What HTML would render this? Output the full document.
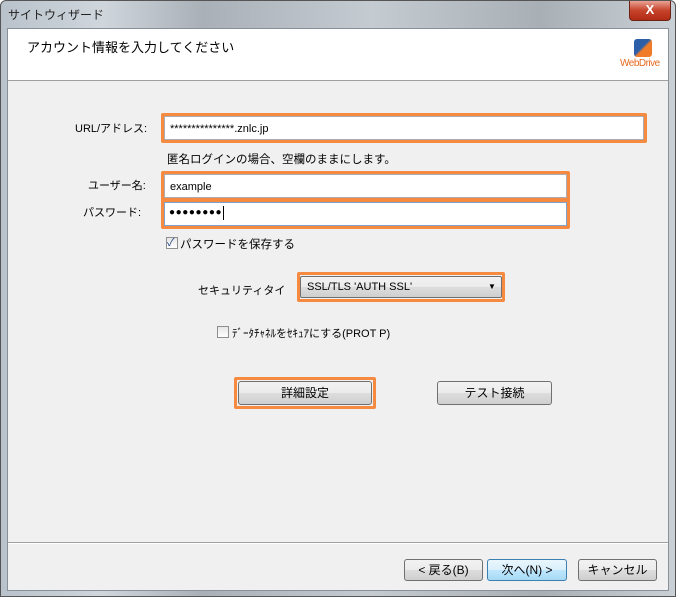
<!DOCTYPE html>
<html><head><meta charset="utf-8"><style>
*{margin:0;padding:0;box-sizing:border-box}
body{width:676px;height:597px;overflow:hidden;font-family:"Liberation Sans","Noto Sans CJK JP",sans-serif;font-size:12px;color:#000;background:#fff}
.win{position:absolute;left:0;top:0;width:676px;height:597px;background:linear-gradient(90deg,#b9c2cb 0%,#cfd6dc 15%,#a9b0b7 30%,#c4cbd1 55%,#a8afb5 80%,#c9d0d6 100%);border:1px solid #555;border-radius:6px 6px 0 0}
.title{position:absolute;left:7px;top:5px;font-size:12px;color:#222}
.close{position:absolute;left:628px;top:0;width:42px;height:20px;background:linear-gradient(#e8a294,#c7432b 50%,#b22a14);border:1px solid #6b2416;border-top:none;border-radius:0 0 4px 4px;color:#fff;font-weight:bold;text-align:center;font-size:13px;line-height:18px}
.client{position:absolute;left:7px;top:28px;width:662px;height:563px;background:#f0f0f0;border:1px solid #8a9097}
.head{position:absolute;left:0;top:0;width:660px;height:52px;background:#fff;border-bottom:1px solid #a0a0a0}
.abs{position:absolute;white-space:nowrap}
.lbl{font-size:11px}
.or{position:absolute;border:3px solid #f58a40;border-radius:2px}
.inp{position:absolute;background:#fff;border:1px solid #abadb3}
.btn{position:absolute;border:1px solid #707070;border-radius:3px;background:linear-gradient(#f2f2f2,#ebebeb 50%,#dddddd 51%,#cfcfcf);text-align:center;line-height:20px;font-size:12px}
.cb{position:absolute;width:12px;height:12px;border:1px solid #8f8f8f;background:linear-gradient(#e6e6e6,#fff)}
</style></head><body>
<div class="win">
<div class="title">サイトウィザード</div>
<div class="close">X</div>
</div>
<div class="client">
<div class="head">
<div class="abs" style="left:19px;top:8px;font-size:13px">アカウント情報を入力してください</div>
<div class="abs" style="left:626px;top:10px;width:18px;height:18px;border-radius:3px;background:linear-gradient(135deg,#2c5fa8 45%,#f07c2a 55%)"></div>
<div class="abs" style="left:612px;top:29px;font-size:10px;color:#e86a1e;letter-spacing:-0.5px">WebDrive</div>
</div>
<div style="position:absolute;left:0;top:513px;width:660px;height:1px;background:#a0a0a0"></div>
<div style="position:absolute;left:0;top:514px;width:660px;height:1px;background:#fff"></div>
</div>

<div class="abs lbl" style="left:75px;top:120px">URL/アドレス:</div>
<div class="or" style="left:161px;top:113px;width:486px;height:30px"></div>
<div class="inp" style="left:164px;top:116px;width:480px;height:24px"></div>
<div class="abs" style="left:170px;top:123px;font-size:11px">***************.znlc.jp</div>
<div class="abs" style="left:167px;top:151px;font-size:11.5px">匿名ログインの場合、空欄のままにします。</div>

<div class="abs lbl" style="left:88px;top:177px">ユーザー名:</div>
<div class="abs lbl" style="left:83px;top:204px">パスワード:</div>
<div class="or" style="left:161px;top:171px;width:409px;height:30px"></div>
<div class="or" style="left:161px;top:199px;width:409px;height:30px"></div>
<div class="inp" style="left:164px;top:174px;width:403px;height:24px"></div>
<div class="inp" style="left:164px;top:202px;width:403px;height:24px;border-color:#7da2ce"></div>
<div class="abs" style="left:170px;top:181px;font-size:11px">example</div>
<div class="abs" style="left:169px;top:207px;font-size:10px;letter-spacing:0.6px">●●●●●●●●</div>
<div class="abs" style="left:223px;top:206px;width:1px;height:14px;background:#000"></div>

<div class="cb" style="left:166px;top:237px"></div>
<div class="abs" style="left:167px;top:234px;font-size:11px;color:#2a4a8a">✓</div>
<div class="abs" style="left:180px;top:236px;font-size:11.5px">パスワードを保存する</div>

<div class="abs lbl" style="left:198px;top:282px">セキュリティタイ</div>
<div class="or" style="left:297px;top:272px;width:208px;height:30px"></div>
<div class="btn" style="left:300px;top:276px;width:202px;height:22px;text-align:left;padding-left:6px;line-height:20px;font-size:11px;border-radius:2px">SSL/TLS 'AUTH SSL'</div>
<div class="abs" style="left:488px;top:282px;font-size:8px">▼</div>

<div class="cb" style="left:217px;top:326px"></div>
<div class="abs" style="left:232px;top:325px;font-size:11px">ﾃﾞｰﾀﾁｬﾈﾙをｾｷｭｱにする(PROT P)</div>

<div class="or" style="left:234px;top:377px;width:142px;height:32px"></div>
<div class="btn" style="left:238px;top:381px;width:134px;height:24px;line-height:22px">詳細設定</div>
<div class="btn" style="left:437px;top:381px;width:115px;height:24px;line-height:22px">テスト接続</div>

<div class="btn" style="left:404px;top:559px;width:79px;height:22px">&lt; 戻る(B)</div>
<div class="btn" style="left:487px;top:559px;width:80px;height:22px;border-color:#3c7fb1;background:linear-gradient(#eaf6fd,#d9f0fc 50%,#bee6fd 51%,#a7d9f5)">次へ(N) &gt;</div>
<div class="btn" style="left:578px;top:559px;width:79px;height:22px">キャンセル</div>
</body></html>
